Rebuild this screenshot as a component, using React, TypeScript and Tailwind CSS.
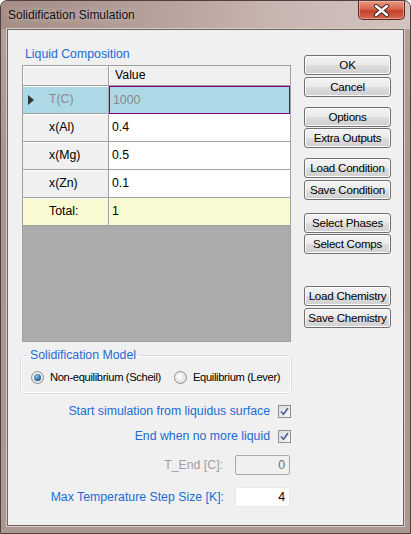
import React from 'react'

const font = "font-['Liberation_Sans',Arial,sans-serif]"

function Btn({ label, mt }: { label: string; mt: string }) {
  return (
    <button
      className={`${mt} w-[87px] h-[20px] rounded-[3px] border border-[#707070] shadow-[inset_0_0_0_1px_#fbfbfb] bg-[linear-gradient(to_bottom,#f3f3f3_0%,#ebebeb_48%,#dddddd_52%,#cfcfcf_100%)] text-[11.6px] leading-none tracking-[-0.25px] text-black whitespace-nowrap flex items-center justify-center`}
    >
      {label}
    </button>
  )
}

function CheckBox() {
  return (
    <div className="w-[13px] h-[13px] border border-[#8e8f8f] bg-[linear-gradient(135deg,#dcdcdc,#f8f8f8)] flex items-center justify-center">
      <svg width="9" height="9" viewBox="0 0 9 9">
        <path d="M1 4.5 L3.5 7.2 L8 1" fill="none" stroke="#4a5f97" strokeWidth="1.6" />
      </svg>
    </div>
  )
}

function Radio({ checked }: { checked: boolean }) {
  return (
    <div className="shrink-0 w-[13px] h-[13px] rounded-full border border-[#8e8f8f] bg-[radial-gradient(circle_at_40%_40%,#ffffff,#d4d4d4)] flex items-center justify-center">
      {checked && (
        <div className="w-[7px] h-[7px] rounded-full bg-[radial-gradient(circle_at_40%_35%,#8cc8ee,#1b5a8e_70%,#0d3a66)]" />
      )}
    </div>
  )
}

type Row = { name: string; value: string; kind?: 'sel' | 'total' }

const rows: Row[] = [
  { name: 'T(C)', value: '1000', kind: 'sel' },
  { name: 'x(Al)', value: '0.4' },
  { name: 'x(Mg)', value: '0.5' },
  { name: 'x(Zn)', value: '0.1' },
  { name: 'Total:', value: '1', kind: 'total' },
]

export default function App() {
  return (
    <div className={`${font} w-[411px] h-[534px] flex flex-col rounded-t-[7px] border border-[#4f403d] bg-[linear-gradient(to_bottom,#b7a39d,#a89590_30%,#ab9893_100%)] overflow-hidden`}>
      {/* Title bar */}
      <div className="h-[28px] flex items-start justify-between bg-[linear-gradient(to_right,#a58d86,#b49f99_35%,#c6b4af_65%,#d3c4c0)]">
        <div className="pl-[7px] pt-[7px] text-[12px] leading-[14px] text-[#111] [text-shadow:0_0_6px_rgba(255,255,255,0.6)]">
          Solidification Simulation
        </div>
        <div className="mr-[5px] w-[47px] h-[19px] rounded-b-[5px] border border-t-0 border-[#5b2a21] bg-[linear-gradient(to_bottom,#e79a86_0%,#d6664d_45%,#c4432b_55%,#d2694f_100%)] shadow-[inset_0_0_0_1px_rgba(255,200,190,0.5)] flex items-center justify-center">
          <svg width="17" height="13" viewBox="0 0 17 13">
            <path d="M3 2 L14 11 M14 2 L3 11" stroke="#3b2520" strokeWidth="4.2" strokeLinecap="round" />
            <path d="M3 2 L14 11 M14 2 L3 11" stroke="#ffffff" strokeWidth="2.4" strokeLinecap="round" />
          </svg>
        </div>
      </div>

      {/* Client area */}
      <div className="mx-[6px] mb-[7px] flex-1 border border-[#6e6260] shadow-[0_0_0_1px_#d9cdca] bg-[#f0f0f0] flex">
        {/* Left column */}
        <div className="ml-[12px] w-[272px] shrink-0 flex flex-col text-[12.3px]">
          <div className="mt-[17px] ml-[5px] leading-[14px] text-[#1d6ad6]">Liquid Composition</div>

          {/* Grid */}
          <div className="mt-[4px] ml-[2px] w-[269px] h-[277px] border border-[#a0a0a0] bg-[#ababab] flex flex-col">
            <div className="h-[20px] flex border-b border-[#a0a0a0] bg-[#f0f0f0] text-black">
              <div className="w-[86px] border-r border-[#a0a0a0] shadow-[inset_1px_1px_0_#ffffff]" />
              <div className="flex-1 pl-[6px] flex items-center shadow-[inset_1px_0_0_#ffffff]">Value</div>
            </div>
            {rows.map((r) => {
              const headBg = r.kind === 'sel' ? 'bg-[#add8e6]' : r.kind === 'total' ? 'bg-[#fafad2]' : 'bg-[#f0f0f0]'
              const cellBg = r.kind === 'sel' ? 'bg-[#add8e6]' : r.kind === 'total' ? 'bg-[#fafad2]' : 'bg-white'
              const txt = r.kind === 'sel' ? 'text-[#8a8a8a]' : 'text-black'
              return (
                <div key={r.name} className="h-[28px] flex">
                  <div className={`w-[86px] border-r border-b border-[#a0a0a0] shadow-[inset_0_1px_0_#ffffff] ${headBg} ${txt} flex items-center`}>
                    {r.kind === 'sel' ? (
                      <>
                        <svg className="ml-[5px]" width="6" height="10" viewBox="0 0 6 10">
                          <path d="M0 0 L6 5 L0 10 Z" fill="#333" />
                        </svg>
                        <span className="ml-[15px]">{r.name}</span>
                      </>
                    ) : (
                      <span className="ml-[26px]">{r.name}</span>
                    )}
                  </div>
                  <div
                    className={`flex-1 ${cellBg} ${txt} flex items-center pl-[3px] ${
                      r.kind === 'sel' ? 'border border-[#800080]' : 'border-b border-[#a0a0a0]'
                    }`}
                  >
                    {r.value}
                  </div>
                </div>
              )
            })}
          </div>

          {/* Solidification model */}
          <fieldset className="mt-[6px] w-[272px] min-w-0 rounded-[3px] border border-[#d5dfe5] shadow-[inset_0_0_0_1px_#ffffff]">
            <legend className="ml-[7px] px-[2px] leading-[14px] text-[#1d6ad6]">Solidification Model</legend>
            <div className="h-[31px] flex items-center pl-[10px] text-[11.2px] tracking-[-0.35px] text-black whitespace-nowrap">
              <Radio checked />
              <span className="ml-[6px]">Non-equilibrium (Scheil)</span>
              <div className="ml-[13px]">
                <Radio checked={false} />
              </div>
              <span className="ml-[6px]">Equilibrium (Lever)</span>
            </div>
          </fieldset>

          <div className="mt-[9px] h-[16px] flex items-center justify-end pr-[1px] text-[#1d6ad6] whitespace-nowrap">
            <span>Start simulation from liquidus surface</span>
            <div className="ml-[8px]">
              <CheckBox />
            </div>
          </div>
          <div className="mt-[9px] h-[16px] flex items-center justify-end pr-[1px] text-[#1d6ad6] whitespace-nowrap">
            <span>End when no more liquid</span>
            <div className="ml-[8px]">
              <CheckBox />
            </div>
          </div>

          <div className="mt-[11px] h-[20px] flex items-center justify-end pr-[2px] whitespace-nowrap">
            <span className="text-[#a0a0a0]">T_End [C]:</span>
            <div className="ml-[12px] w-[55px] h-[20px] rounded-[2px] border border-[#a9a9a9] bg-[#f0f0f0] flex items-center justify-end pr-[4px] text-[#6d6d6d]">
              0
            </div>
          </div>
          <div className="mt-[12px] h-[20px] flex items-center justify-end pr-[2px] whitespace-nowrap">
            <span className="text-[#1d6ad6]">Max Temperature Step Size [K]:</span>
            <div className="ml-[11px] w-[55px] h-[20px] rounded-[2px] border border-[#e2e8ee] bg-white flex items-center justify-end pr-[4px] text-black">
              4
            </div>
          </div>
        </div>

        {/* Right column: buttons */}
        <div className="ml-[12px] pt-[25px] flex flex-col">
          <Btn label="OK" mt="mt-0" />
          <Btn label="Cancel" mt="mt-[2px]" />
          <Btn label="Options" mt="mt-[10px]" />
          <Btn label="Extra Outputs" mt="mt-[1px]" />
          <Btn label="Load Condition" mt="mt-[10px]" />
          <Btn label="Save Condition" mt="mt-[2px]" />
          <Btn label="Select Phases" mt="mt-[13px]" />
          <Btn label="Select Comps" mt="mt-[1px]" />
          <Btn label="Load Chemistry" mt="mt-[32px]" />
          <Btn label="Save Chemistry" mt="mt-[2px]" />
        </div>
      </div>
    </div>
  )
}
